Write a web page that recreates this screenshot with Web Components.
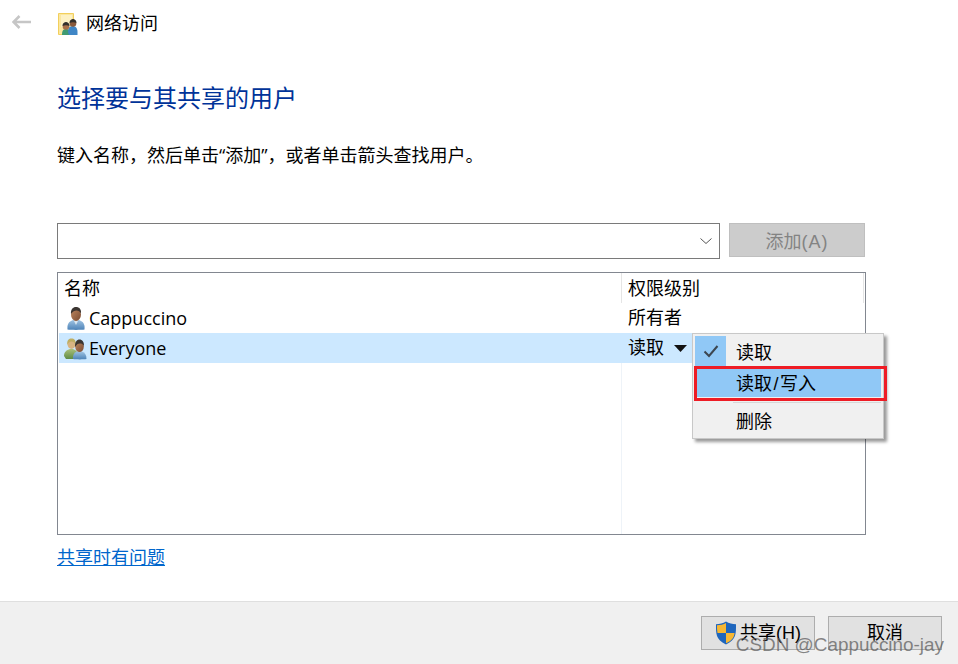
<!DOCTYPE html>
<html lang="zh-CN"><head><meta charset="utf-8">
<style>
html,body{margin:0;padding:0;background:#fff}
body{width:958px;height:664px;overflow:hidden;font:18px/24px "Liberation Sans","Noto Sans CJK SC",sans-serif;color:#000}
</style></head><body>
<share-dialog></share-dialog>
<script>
const FONT='"Liberation Sans","Noto Sans CJK SC",sans-serif';
const DEFS=`<defs><linearGradient id="bl" x1="0" y1="0" x2="0" y2="1"><stop offset="0" stop-color="#9fc3e2"/><stop offset="1" stop-color="#4d83b8"/></linearGradient><linearGradient id="gr" x1="0" y1="0" x2="0" y2="1"><stop offset="0" stop-color="#a9bf7c"/><stop offset="1" stop-color="#5f8c45"/></linearGradient><linearGradient id="sk" x1="0" y1="0" x2="1" y2="1"><stop offset="0" stop-color="#c08a62"/><stop offset="1" stop-color="#7a4a30"/></linearGradient></defs>`;
const USER1=`<svg slot="icon" width="24" height="24" viewBox="0 0 24 24">${DEFS}<path d="M3.500 23.500c-.5-5 1-8 5.500-9.500h6c4.500 1.500 6 4.500 5.500 9.500-3 .5-14 .5-17 0z" fill="url(#bl)"/><path d="M9.500 14l2.500 5 2.500-5z" fill="#d9e6f0"/><ellipse cx="12" cy="8.500" rx="5" ry="6.500" fill="url(#sk)"/><path d="M7 8C6.500 3.500 9 1 12 1s5.500 2 5 6.500c-1-2-2.500-3-4.500-3S9 5 7 8z" fill="#3b3531"/></svg>`;
const USER2=`<svg slot="icon" width="24" height="24" viewBox="0 0 24 24">${DEFS}<path d="M0 20c0-4 2.500-6 6-7h3c3 1 5 3 5 6l-5 4H2z" fill="url(#gr)"/><ellipse cx="7.500" cy="8" rx="4" ry="5" fill="#d8b483"/><path d="M3.500 9C2.500 4 5 2.500 7.500 2.500S12.500 4 11.500 9c-.5-2-2-3.500-4-3.500S4 7 3.500 9z" fill="#bfae62"/><path d="M9 23c-.5-4 1-6.500 4-7.500h5c3 1 4.500 3.500 4.500 7.500-3 .5-10.500.5-13.500 0z" fill="url(#bl)"/><ellipse cx="15.500" cy="10.500" rx="4.300" ry="5.500" fill="url(#sk)"/><path d="M11.200 11c-.7-5 1.800-7.500 4.300-7.500S20.500 6 19.800 10c-1-2-2-2.500-4-2.500s-3.300 1-4.600 3.500z" fill="#3b3531"/></svg>`;
function el(name,html){customElements.define(name,class extends HTMLElement{constructor(){super();this.attachShadow({mode:'open'}).innerHTML=html}})}

el('title-bar',`<style>:host{display:flex;align-items:center;height:48px;box-sizing:border-box;padding-left:12px}
svg{display:block}.b{margin-right:27px;margin-bottom:4px}.i{margin-right:8px}span{font-size:18px;line-height:24px}</style>
<svg class="b" width="19" height="14" viewBox="0 0 19 14"><path d="M7.500 1 1.500 7 7.500 13M2 7h17" fill="none" stroke="#c6c6c6" stroke-width="2.600"/></svg>
<svg class="i" width="20" height="22" viewBox="0 0 20 22"><path d="M.5.500h15v21H.5z" fill="#fbe7a0" stroke="#f2cf5c"/><path d="M3 2h11v12H3z" fill="#fdf1c4"/><path d="M4 22c0-4 1-6 4-6s5 2 5 6z" fill="#3f9a72"/><path d="M10 19c0-4 1.500-6 4.500-6s5 2 5 6v3H11z" fill="#3f86c6"/><circle cx="8" cy="13.500" r="3.300" fill="#a9704a"/><circle cx="15" cy="10.500" r="3.300" fill="#8a5a3c"/><path d="M11.500 10c0-3 2-4 3.500-4s3.500 1 3.500 4c-2-1-5-1-7 0zM4.500 13c0-3 2-4 3.500-4s3.500 1 3.500 4c-2-1-5-1-7 0z" fill="#33302c"/></svg>
<span>网络访问</span>`);

el('combo-box',`<style>:host{display:flex;align-items:center;justify-content:flex-end;flex:none;width:663px;height:36px;box-sizing:border-box;border:1px solid #7a7a7a;background:#fff;padding-right:7px}svg{display:block}</style>
<svg width="12" height="6" viewBox="0 0 12 6"><path d="M.5.500 6 5.500 11.500.500" fill="none" stroke="#555" stroke-width="1"/></svg>`);

el('dlg-button',`<style>:host{display:inline-flex;flex:none;align-items:center;justify-content:center;box-sizing:border-box;height:34px;width:114px;background:#e1e1e1;border:1px solid #adadad;font-size:18px;line-height:24px;color:#000}
:host([disabled]){background:#ccc;border-color:#bfbfbf;color:#838383;width:136px;padding-top:3px}
::slotted(svg){margin-right:3px}</style><slot></slot>`);

el('user-row',`<style>:host{display:flex;align-items:center;height:30px;margin-left:1px}
:host([selected]){background:#cce8ff}
.n{display:flex;align-items:center;width:563px;box-sizing:border-box;padding-left:5px;gap:1px}
.n span{font:18px/24px "Open Sans",sans-serif}
.p{display:flex;align-items:center;padding-left:6px;font-size:18px}
::slotted(svg.arrow){margin-left:10px}
</style>
<div class="n"><slot name="icon"></slot><span><slot name="name"></slot></span></div><div class="p"><slot></slot></div>`);

el('user-list',`<style>:host{display:block;position:relative;width:809px;height:263px;box-sizing:border-box;border:1px solid #828790;background:#fff}
.h{display:flex;height:30px;align-items:center;font-size:18px}
.h div{box-sizing:border-box;padding-left:6px;padding-top:2px}
.c1{width:564px;padding-left:6px!important;height:100%;display:flex;align-items:center;border-right:1px solid #e5e5e5}
.c2{width:242px;height:100%;display:flex;align-items:center;border-right:1px solid #e5e5e5}
.v{position:absolute;left:563px;top:90px;bottom:0;width:1px;background:#eef3f8}
</style><div class="h"><div class="c1">名称</div><div class="c2">权限级别</div></div><slot></slot><div class="v"></div>`);

el('perm-menu',`<style>:host{display:block;position:absolute;left:635px;top:61px;width:192px;height:106px;box-sizing:border-box;background:#f0f0f0;border:1px solid #c8c8c8;box-shadow:3px 3px 3px rgba(0,0,0,.4);font-size:18px}
.r{display:flex;align-items:center;position:relative;height:30px;padding-left:43px;box-sizing:border-box}
.chk{position:absolute;left:2px;top:2px;width:31px;height:30px;background:#90c8f6;display:flex;align-items:center;justify-content:center}
.r1{height:34px;padding-top:4px}
.r2{height:29px;padding-top:3px;margin:0 2px 0 1px;padding-left:42px;background:#90c8f6}
.hl{position:absolute;left:1px;top:32px;width:193px;height:35px;box-sizing:border-box;border:3px solid #ee1c25;pointer-events:none}
.sep{height:1px;background:#d7d7d7;margin:5px 2px 0 40px}
.r3{height:30px;margin-top:3px;padding-top:2px}
svg{display:block}
.s{padding:0 1.500px}</style>
<div class="chk"><svg width="16" height="14" viewBox="0 0 16 14"><path d="M1.500 7.500 6 12 14.500 2" fill="none" stroke="#3c4650" stroke-width="2"/></svg></div>
<div class="r r1"><span>读取</span></div><div class="r r2"><span>读取<span class="s">/</span>写入</span></div><div class="sep"></div><div class="r r3"><span>删除</span></div><div class="hl"></div>`);

el('foot-bar',`<style>:host{display:flex;justify-content:flex-end;align-items:flex-start;gap:13px;height:63px;box-sizing:border-box;background:#f0f0f0;border-top:1px solid #dfdfdf;padding:14px 16px 0 0}</style><slot></slot>`);

el('water-mark',`<style>:host{position:absolute;right:14px;bottom:9px;font:18.900px/20px "Liberation Sans",sans-serif;color:rgba(90,90,90,.72);white-space:nowrap}</style><slot></slot>`);

el('share-dialog',`<style>:host{display:flex;flex-direction:column;position:relative;width:958px;height:664px;font:18px/24px ${FONT};color:#000;overflow:hidden}
main{flex:1;padding:0 57px;display:flex;flex-direction:column;position:relative}
h1{font-weight:400;font-size:24px;line-height:32px;color:#003399;margin:0;padding-top:35px}
p{margin:0;padding-top:28px;font-size:18px;line-height:24px}
.q{font-family:"Open Sans",sans-serif}
.row{display:flex;gap:9px;margin-top:55px;width:808px}
.list{margin-top:13px;position:relative}
a{display:inline-block;margin-top:11px;color:#0066cc;text-decoration:underline;font-size:18px;line-height:24px;align-self:flex-start}
.w{letter-spacing:1px}
</style>
<title-bar></title-bar>
<main>
<h1>选择要与其共享的用户</h1>
<p>键入名称&#xFF0C;然后单击<span class="q">“</span>添加<span class="q">”</span>&#xFF0C;或者单击箭头查找用户。</p>
<div class="row"><combo-box></combo-box><dlg-button disabled>添加<span class="w">(A)</span></dlg-button></div>
<div class="list"><user-list>
<user-row>${USER1}<span slot="name">Cappuccino</span>所有者</user-row>
<user-row selected>${USER2}<span slot="name">Everyone</span>读取<svg class="arrow" width="13" height="7" viewBox="0 0 13 7"><path d="M0 0h13L6.500 7z" fill="#111"/></svg></user-row>
</user-list><perm-menu></perm-menu></div>
<a href="#">共享时有问题</a>
</main>
<foot-bar><dlg-button><svg width="22" height="24" viewBox="0 0 22 24"><path d="M11 .5C8 2.500 4.500 3.200 1 3.200c0 9-.5 15.300 10 20.300 10.500-5 10-11.300 10-20.300-3.500 0-7-.7-10-2.700z" fill="#1f66bd"/><path d="M11 2v10H2.500C2 9 2 7 2 4.300 5.500 4.200 8.500 3.500 11 2zM11 12h8.600c-.4 4.500-2.600 7.500-8.600 10.300z" fill="#f7b733"/></svg>共享(H)</dlg-button><dlg-button>取消</dlg-button></foot-bar>
<water-mark>CSDN @Cappuccino-jay</water-mark>`);
</script></body></html>
